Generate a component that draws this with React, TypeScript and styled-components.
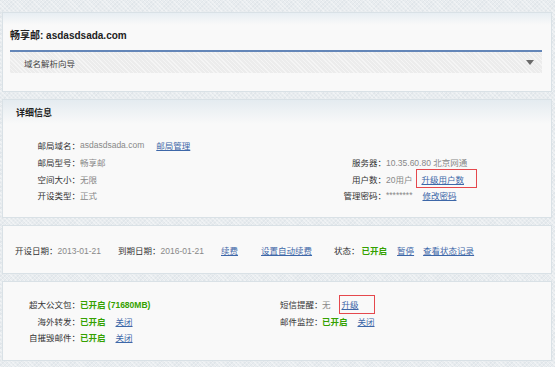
import styled, { createGlobalStyle } from 'styled-components';

const GlobalStyle = createGlobalStyle`
  html, body {
    margin: 0;
    padding: 0;
  }
  body {
    font-family: 'Liberation Sans', 'Noto Sans CJK SC', sans-serif;
    font-size: 8.5px;
    color: #333;
  }
`;

const Page = styled.div`
  min-height: 367px;
  box-sizing: border-box;
  padding: 12px 3px 0 2px;
  display: flex;
  flex-direction: column;
  gap: 7px;
  background-color: #e8ecef;
  background-image: repeating-linear-gradient(
      45deg,
      rgba(255, 255, 255, 0.35) 0 1px,
      transparent 1px 3px
    ),
    repeating-linear-gradient(
      -45deg,
      rgba(200, 210, 218, 0.25) 0 1px,
      transparent 1px 3px
    );
`;

interface PanelProps {
  $height: number;
}

const Panel = styled.section<PanelProps>`
  height: ${({ $height }) => $height}px;
  box-sizing: border-box;
  background: #f9f9f9;
  border: 1px solid #d9e1e6;
`;

const TopPanel = styled(Panel)`
  background: linear-gradient(#e7eef3 0, #f9f9f9 12px);
  padding: 16px 9px 0 7px;
`;

const Title = styled.h1`
  margin: 0 0 7px;
  font-size: 10px;
  line-height: 14px;
  font-weight: bold;
  color: #222;
`;

const Dropdown = styled.div`
  height: 21px;
  border-top: 2px solid #6486b8;
  display: flex;
  align-items: center;
  justify-content: space-between;
  padding: 0 8px 0 14px;
  background-color: #ececec;
  background-image: repeating-linear-gradient(
    45deg,
    rgba(255, 255, 255, 0.45) 0 1px,
    transparent 1px 3px
  );
  color: #444;
`;

const Header = styled.div`
  height: 24px;
  display: flex;
  align-items: center;
  padding-left: 13px;
  font-size: 9px;
  font-weight: bold;
  color: #222;
  background: linear-gradient(#e4ebf0, #f9f9f9);
`;

interface GridProps {
  $cols: string;
  $row: number;
  $top: number;
}

const Grid = styled.div<GridProps>`
  display: grid;
  grid-template-columns: ${({ $cols }) => $cols};
  grid-auto-rows: ${({ $row }) => $row}px;
  align-items: center;
  padding-top: ${({ $top }) => $top}px;
`;

interface LabelProps {
  $align?: 'left' | 'right';
}

const Label = styled.span<LabelProps>`
  text-align: ${({ $align }) => $align || 'right'};
  color: #333;
  white-space: nowrap;
`;

const Value = styled.span`
  color: #888;
  white-space: nowrap;
  display: flex;
  align-items: center;
`;

interface GapProps {
  $ml?: number;
}

const Link = styled.a<GapProps>`
  margin-left: ${({ $ml }) => $ml || 0}px;
  color: #3d67a8;
  text-decoration: underline;
  cursor: pointer;
  white-space: nowrap;
`;

const On = styled.span<GapProps>`
  margin-left: ${({ $ml }) => $ml || 0}px;
  color: #34a100;
  font-weight: bold;
  white-space: nowrap;
`;

interface MarkProps {
  $ml: number;
  $pl: number;
  $pr: number;
}

const Marked = styled.span<MarkProps>`
  display: inline-flex;
  align-items: center;
  height: 19px;
  box-sizing: border-box;
  margin-left: ${({ $ml }) => $ml}px;
  padding: 0 ${({ $pr }) => $pr}px 0 ${({ $pl }) => $pl}px;
  border: 1px solid #e5484d;
`;

const Row = styled.div`
  height: 100%;
  display: flex;
  align-items: center;
  padding-left: 12px;
`;

const Item = styled.span<GapProps>`
  margin-left: ${({ $ml }) => $ml || 0}px;
  white-space: nowrap;
`;

const Muted = styled.span`
  color: #888;
`;

const Caret = () => (
  <svg width="8" height="5" viewBox="0 0 8 5">
    <path d="M0 0h8L4 5z" fill="#6a6a6a" />
  </svg>
);

export default function App() {
  return (
    <>
      <GlobalStyle />
      <Page>
        <TopPanel $height={80}>
          <Title>畅享邮: asdasdsada.com</Title>
          <Dropdown>
            <span>域名解析向导</span>
            <Caret />
          </Dropdown>
        </TopPanel>

        <Panel $height={119}>
          <Header>详细信息</Header>
          <Grid $cols="77px 229px 77px 1fr" $row={16.7} $top={13}>
            <Label>邮局域名：</Label>
            <Value>
              asdasdsada.com<Link $ml={12}>邮局管理</Link>
            </Value>
            <span />
            <span />

            <Label>邮局型号：</Label>
            <Value>畅享邮</Value>
            <Label>服务器：</Label>
            <Value>10.35.60.80 北京网通</Value>

            <Label>空间大小：</Label>
            <Value>无限</Value>
            <Label>用户数：</Label>
            <Value>
              20用户
              <Marked $ml={4} $pl={4} $pr={12}>
                <Link>升级用户数</Link>
              </Marked>
            </Value>

            <Label>开设类型：</Label>
            <Value>正式</Value>
            <Label>管理密码：</Label>
            <Value>
              ********<Link $ml={10}>修改密码</Link>
            </Value>
          </Grid>
        </Panel>

        <Panel $height={49}>
          <Row>
            <Item>
              开设日期：<Muted>2013-01-21</Muted>
            </Item>
            <Item $ml={17}>
              到期日期：<Muted>2016-01-21</Muted>
            </Item>
            <Link $ml={17}>续费</Link>
            <Link $ml={23}>设置自动续费</Link>
            <Item $ml={22}>状态：</Item>
            <On $ml={2}>已开启</On>
            <Link $ml={10}>暂停</Link>
            <Link $ml={9}>查看状态记录</Link>
          </Row>
        </Panel>

        <Panel $height={80}>
          <Grid $cols="77px 200px 42px 1fr" $row={16.5} $top={14}>
            <Label>超大公文包：</Label>
            <Value>
              <On>已开启 (71680MB)</On>
            </Value>
            <Label $align="left">短信提醒：</Label>
            <Value>
              无
              <Marked $ml={8} $pl={2} $pr={15}>
                <Link>升级</Link>
              </Marked>
            </Value>

            <Label>海外转发：</Label>
            <Value>
              <On>已开启</On>
              <Link $ml={10}>关闭</Link>
            </Value>
            <Label $align="left">邮件监控：</Label>
            <Value>
              <On>已开启</On>
              <Link $ml={10}>关闭</Link>
            </Value>

            <Label>自摧毁邮件：</Label>
            <Value>
              <On>已开启</On>
              <Link $ml={10}>关闭</Link>
            </Value>
          </Grid>
        </Panel>
      </Page>
    </>
  );
}
